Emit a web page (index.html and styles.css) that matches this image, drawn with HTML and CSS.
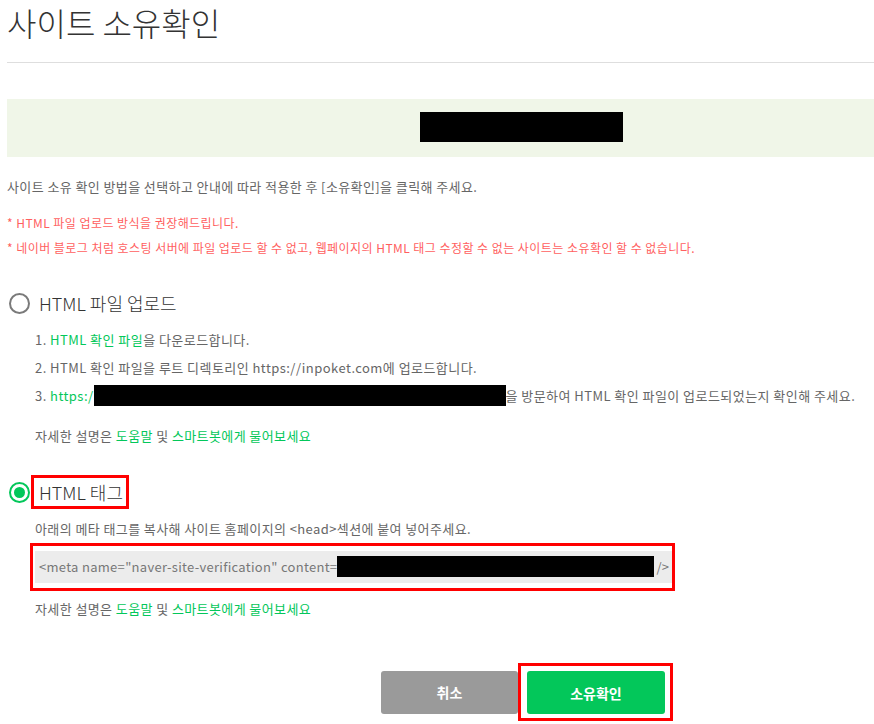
FILE: index.html
```html
<html>
    <head>
        <title>사이트 소유확인</title>
        <link rel="stylesheet" href="styles.css">
    </head>
    <body>
        <div class="wrap">
            <h1 class="title">사이트 소유확인</h1>
            <div class="rule"></div>

            <div class="site-band">
                <span class="mask mask-site"></span>
            </div>

            <p class="guide">사이트 소유 확인 방법을 선택하고 안내에 따라 적용한 후 [소유확인]을 클릭해 주세요.</p>
            <div class="notes">
                <p class="note">* HTML 파일 업로드 방식을 권장해드립니다.</p>
                <p class="note">* 네이버 블로그 처럼 호스팅 서버에 파일 업로드 할 수 없고, 웹페이지의 HTML 태그 수정할 수 없는 사이트는 소유확인 할 수 없습니다.</p>
            </div>

            <div class="option">
                <span class="radio"></span>
                <span class="option-label">HTML 파일 업로드</span>
            </div>
            <ol class="steps">
                <li>1. <a class="link">HTML 확인 파일</a>을 다운로드합니다.</li>
                <li>2. HTML 확인 파일을 루트 디렉토리인 https://inpoket.com에 업로드합니다.</li>
                <li>3. <a class="link">https:/</a><span class="mask mask-url"></span>을 방문하여 HTML 확인 파일이 업로드되었는지 확인해 주세요.</li>
            </ol>
            <p class="help">자세한 설명은 <a class="link">도움말</a> 및 <a class="link">스마트봇에게 물어보세요</a></p>

            <div class="option option-tag">
                <span class="radio checked"></span>
                <span class="option-label marked">HTML 태그</span>
            </div>
            <p class="desc">아래의 메타 태그를 복사해 사이트 홈페이지의 &lt;head&gt;섹션에 붙여 넣어주세요.</p>
            <div class="code-mark">
                <div class="code">&lt;meta name="naver-site-verification" content=<span class="mask mask-code"></span>/&gt;</div>
            </div>
            <p class="help help-tag">자세한 설명은 <a class="link">도움말</a> 및 <a class="link">스마트봇에게 물어보세요</a></p>

            <div class="buttons">
                <button class="btn btn-cancel">취소</button>
                <div class="btn-mark">
                    <button class="btn btn-ok">소유확인</button>
                </div>
            </div>
        </div>
    </body>
</html>
```

FILE: styles.css
```css
body {
    margin: 0;
    font-family: "Noto Sans CJK KR", "Noto Sans", sans-serif;
    color: #666;
    background: #fff;
    overflow: hidden;
}

p {
    margin: 0;
}

.wrap {
    margin-left: 7px;
}

.title {
    margin: 0;
    font-size: 32px;
    font-weight: 300;
    line-height: 44px;
    color: #333;
}

.rule {
    margin-top: 18px;
    border-top: 1px solid #dedede;
}

.site-band {
    margin-top: 36px;
    height: 45px;
    padding: 13px 0 0 413px;
    background: #f0f6e8;
}

.mask {
    display: inline-block;
    background: #000;
    vertical-align: middle;
}

.mask-site {
    width: 203px;
    height: 30px;
}

.guide {
    margin-top: 20px;
    font-size: 13px;
    line-height: 20px;
    letter-spacing: 0.4px;
}

.notes {
    margin-top: 13px;
}

.note {
    font-size: 12px;
    line-height: 25px;
    color: #ff5f5f;
    letter-spacing: 0.45px;
}

.option {
    margin-top: 28px;
    height: 30px;
    display: flex;
    align-items: center;
}

.radio {
    box-sizing: border-box;
    width: 21px;
    height: 21px;
    margin: 0 1px 0 2px;
    border: 2px solid #7a7a7a;
    border-radius: 50%;
    display: flex;
    align-items: center;
    justify-content: center;
}

.radio.checked {
    border-color: #03c75a;
}

.radio.checked::after {
    content: "";
    width: 11px;
    height: 11px;
    border-radius: 50%;
    background: #03c75a;
}

.option-label {
    border: 3px solid transparent;
    padding: 0 3px 0 5px;
    font-size: 18px;
    font-weight: 300;
    line-height: 28px;
    color: #333;
}

.option-label.marked {
    border-color: #ff0000;
}

.option-tag {
    margin-top: 29px;
    height: 34px;
}

.steps {
    margin: 8px 0 0;
    padding: 0 0 0 28px;
    list-style: none;
    font-size: 13px;
    line-height: 28px;
    letter-spacing: 0.45px;
}

.link {
    color: #03c75a;
}

.mask-url {
    width: 412px;
    height: 21px;
    margin-top: -3px;
}

.help {
    margin-top: 16px;
    padding-left: 28px;
    font-size: 13px;
    line-height: 20px;
    letter-spacing: 0.4px;
}

.help-tag {
    margin-top: 8px;
}

.desc {
    margin-top: 10px;
    padding-left: 28px;
    font-size: 13px;
    line-height: 20px;
    letter-spacing: 0.4px;
}

.code-mark {
    margin: 4px 0 0 23px;
    width: 637px;
    padding: 5px 0 5px 2px;
    border: 3px solid #ff0000;
}

.code {
    height: 32px;
    padding-left: 4px;
    background: #ececec;
    font-size: 13px;
    line-height: 32px;
    color: #777;
    letter-spacing: 0.3px;
    white-space: nowrap;
}

.mask-code {
    width: 317px;
    height: 21px;
    margin: -3px 2px 0 0;
}

.buttons {
    margin: 44px 0 0 374px;
    display: flex;
    align-items: center;
}

.btn-mark {
    border: 3px solid #ff0000;
    padding: 5px 5px 4px 6px;
}

.btn {
    height: 43px;
    border: 0;
    border-radius: 3px;
    font-family: inherit;
    font-size: 14px;
    font-weight: 700;
    color: #fff;
}

.btn-cancel {
    width: 137px;
    background: #9a9a9a;
}

.btn-ok {
    width: 138px;
    display: block;
    background: #03c75a;
}
```
